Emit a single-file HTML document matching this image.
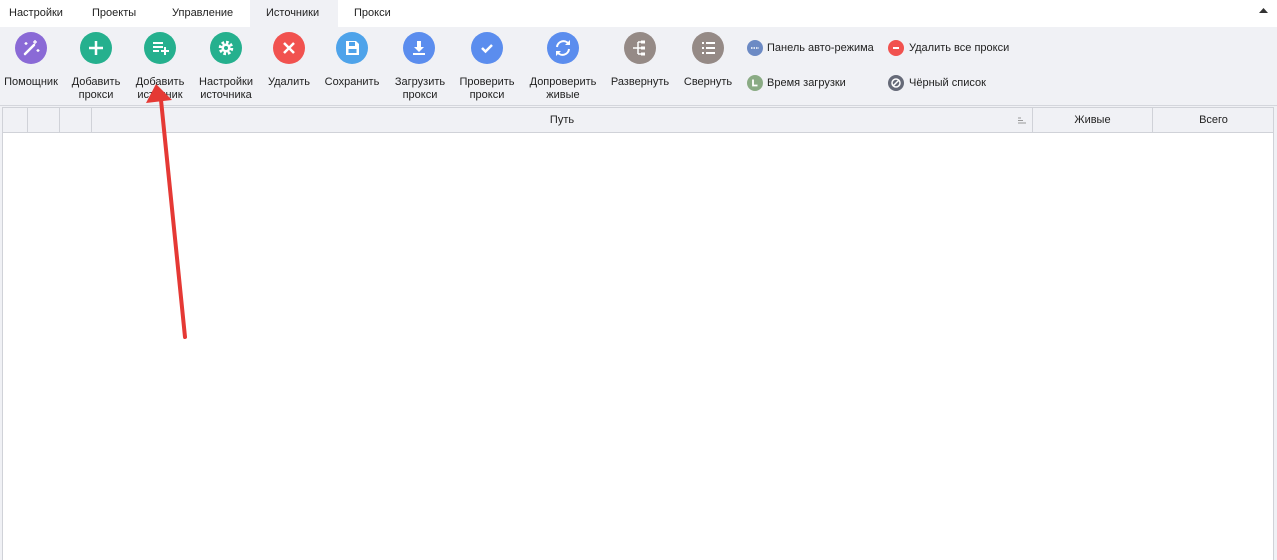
<!DOCTYPE html>
<html><head><meta charset="utf-8"><style>
*{margin:0;padding:0;box-sizing:border-box}
body{width:1277px;height:560px;overflow:hidden;background:#f0f1f5;font-family:"Liberation Sans","DejaVu Sans",sans-serif;font-size:11px;color:#222;position:relative}
.tabs{position:absolute;left:0;top:0;width:1277px;height:27px;background:#fff}
.tab{position:absolute;top:7px;font-size:11px}
.act{position:absolute;left:250px;top:0;width:88px;height:27px;background:#f0f1f5}
.ic{position:absolute;width:32px;height:32px;border-radius:50%;top:32px}
.ic svg{width:32px;height:32px}
.lb{position:absolute;top:76px;text-align:center;line-height:13px;font-size:11px;transform:translateX(-50%);white-space:nowrap}
.sm{position:absolute;width:16px;height:16px;border-radius:50%}
.st{position:absolute;font-size:11px}
.sep{position:absolute;left:0;top:105px;width:1277px;height:1px;background:#d4d6dc}
.grid{position:absolute;left:2px;top:107px;width:1272px;height:453px;background:#fff;border-left:1px solid #d0d2d8;border-right:1px solid #d0d2d8}
.hdr{position:absolute;left:0;top:0;width:100%;height:26px;background:#f0f1f5;border-top:1px solid #d0d2d8;border-bottom:1px solid #d0d2d8}
.c{position:absolute;top:0;height:24px;border-right:1px solid #d0d2d8;text-align:center;line-height:25px}
</style></head><body>
<div class="tabs">
<div class="act"></div>
<div class="tab" style="left:9px">Настройки</div>
<div class="tab" style="left:92px">Проекты</div>
<div class="tab" style="left:172px">Управление</div>
<div class="tab" style="left:266px">Источники</div>
<div class="tab" style="left:354px">Прокси</div>
<svg style="position:absolute;left:1259px;top:8px" width="9" height="6"><path d="M0 5 L4.5 0 L9 5Z" fill="#333"/></svg>
</div>

<div class="ic" style="left:15px;background:#8a6ad6"><svg viewBox="0 0 32 32"><path d="M10 22 L19 13" stroke="#fff" stroke-width="2.5" stroke-linecap="round"/><path d="M20 8v4M18 10h4M11 10v3M9.5 11.5h3M23 17v3M21.5 18.5h3" stroke="#fff" stroke-width="1.3"/></svg></div>
<div class="ic" style="left:80px;background:#25b08e"><svg viewBox="0 0 32 32"><path d="M16 9v14M9 16h14" stroke="#fff" stroke-width="2.5"/></svg></div>
<div class="ic" style="left:144px;background:#25b08e"><svg viewBox="0 0 32 32"><path d="M9 11h10M9 15h10M9 19h6M17 19h8M21 15v8" stroke="#fff" stroke-width="2"/></svg></div>
<div class="ic" style="left:210px;background:#25b08e"><svg viewBox="0 0 32 32"><circle cx="16" cy="16" r="5.5" fill="none" stroke="#fff" stroke-width="3.5" stroke-dasharray="2.5 1.8"/><circle cx="16" cy="16" r="4.5" fill="#fff"/><circle cx="16" cy="16" r="2" fill="#25b08e"/></svg></div>
<div class="ic" style="left:273px;background:#f1524f"><svg viewBox="0 0 32 32"><path d="M11 11l10 10M21 11l-10 10" stroke="#fff" stroke-width="2.5"/></svg></div>
<div class="ic" style="left:336px;background:#4ea3ea"><svg viewBox="0 0 32 32"><path d="M10 9h10l3 3v11H10z" fill="#fff"/><rect x="13" y="10" width="6" height="4" fill="#4ea3ea"/><rect x="12.5" y="17" width="8" height="4" fill="#4ea3ea"/></svg></div>
<div class="ic" style="left:403px;background:#5b8dee"><svg viewBox="0 0 32 32"><path d="M14 9h4v6h3l-5 5-5-5h3z" fill="#fff"/><rect x="10" y="21" width="12" height="2" fill="#fff"/></svg></div>
<div class="ic" style="left:471px;background:#5b8dee"><svg viewBox="0 0 32 32"><path d="M11 16l3.5 3.5L21 13" fill="none" stroke="#fff" stroke-width="2.5"/></svg></div>
<div class="ic" style="left:547px;background:#5b8dee"><svg viewBox="0 0 32 32"><path d="M10 15a6.5 6.5 0 0 1 11.5-3.5M22 17a6.5 6.5 0 0 1-11.5 3.5" fill="none" stroke="#fff" stroke-width="2"/><path d="M23 8v5h-5zM9 24v-5h5z" fill="#fff"/></svg></div>
<div class="ic" style="left:624px;background:#958a86"><svg viewBox="0 0 32 32"><path d="M9 16h5M14 10v12M14 10h3M14 16h3M14 22h3" stroke="#fff" stroke-width="1.5" fill="none"/><rect x="17" y="8.5" width="4" height="3" fill="#fff"/><rect x="17" y="14.5" width="4" height="3" fill="#fff"/><rect x="17" y="20.5" width="4" height="3" fill="#fff"/></svg></div>
<div class="ic" style="left:692px;background:#958a86"><svg viewBox="0 0 32 32"><path d="M10 11h2M10 16h2M10 21h2M14 11h9M14 16h9M14 21h9" stroke="#fff" stroke-width="2"/></svg></div>

<div class="lb" style="left:31px">Помощник</div>
<div class="lb" style="left:96px">Добавить<br>прокси</div>
<div class="lb" style="left:160px">Добавить<br>источник</div>
<div class="lb" style="left:226px">Настройки<br>источника</div>
<div class="lb" style="left:289px">Удалить</div>
<div class="lb" style="left:352px">Сохранить</div>
<div class="lb" style="left:420px">Загрузить<br>прокси</div>
<div class="lb" style="left:487px">Проверить<br>прокси</div>
<div class="lb" style="left:563px">Допроверить<br>живые</div>
<div class="lb" style="left:640px">Развернуть</div>
<div class="lb" style="left:708px">Свернуть</div>

<div class="sm" style="left:747px;top:40px;background:#6c8ac4"><svg width="16" height="16"><path d="M4 8h8" stroke="#fff" stroke-width="1.5" stroke-dasharray="1.5 1"/></svg></div>
<div class="st" style="left:767px;top:42px">Панель авто-режима</div>
<div class="sm" style="left:888px;top:40px;background:#f1524f"><svg width="16" height="16"><path d="M5 8h6" stroke="#fff" stroke-width="2"/></svg></div>
<div class="st" style="left:909px;top:42px">Удалить все прокси</div>
<div class="sm" style="left:747px;top:75px;background:#8aab84"><svg width="16" height="16"><path d="M6 4.5v6h4.5" stroke="#fff" stroke-width="1.8" fill="none"/></svg></div>
<div class="st" style="left:767px;top:77px">Время загрузки</div>
<div class="sm" style="left:888px;top:75px;background:#666a78"><svg width="16" height="16"><circle cx="8" cy="8" r="4" stroke="#fff" stroke-width="1.5" fill="none"/><path d="M5 11L11 5" stroke="#fff" stroke-width="1.5"/></svg></div>
<div class="st" style="left:909px;top:77px">Чёрный список</div>

<div class="sep"></div>
<div class="grid"><div class="hdr">
<div class="c" style="left:0;width:25px"></div>
<div class="c" style="left:25px;width:32px"></div>
<div class="c" style="left:57px;width:32px"></div>
<div class="c" style="left:89px;width:941px">Путь<svg style="position:absolute;right:6px;top:9px" width="8" height="7"><path d="M0 1h3M0 3.5h5M0 6h8" stroke="#999" stroke-width="1"/></svg></div>
<div class="c" style="left:1030px;width:120px">Живые</div>
<div class="c" style="left:1150px;width:121px;border-right:none">Всего</div>
</div></div>

<svg style="position:absolute;left:0;top:0" width="1277" height="560"><path d="M185 337 L161 100" stroke="#e53935" stroke-width="4" stroke-linecap="round"/><path d="M156 84 L146 103 L172 100Z" fill="#e53935"/></svg>
</body></html>
